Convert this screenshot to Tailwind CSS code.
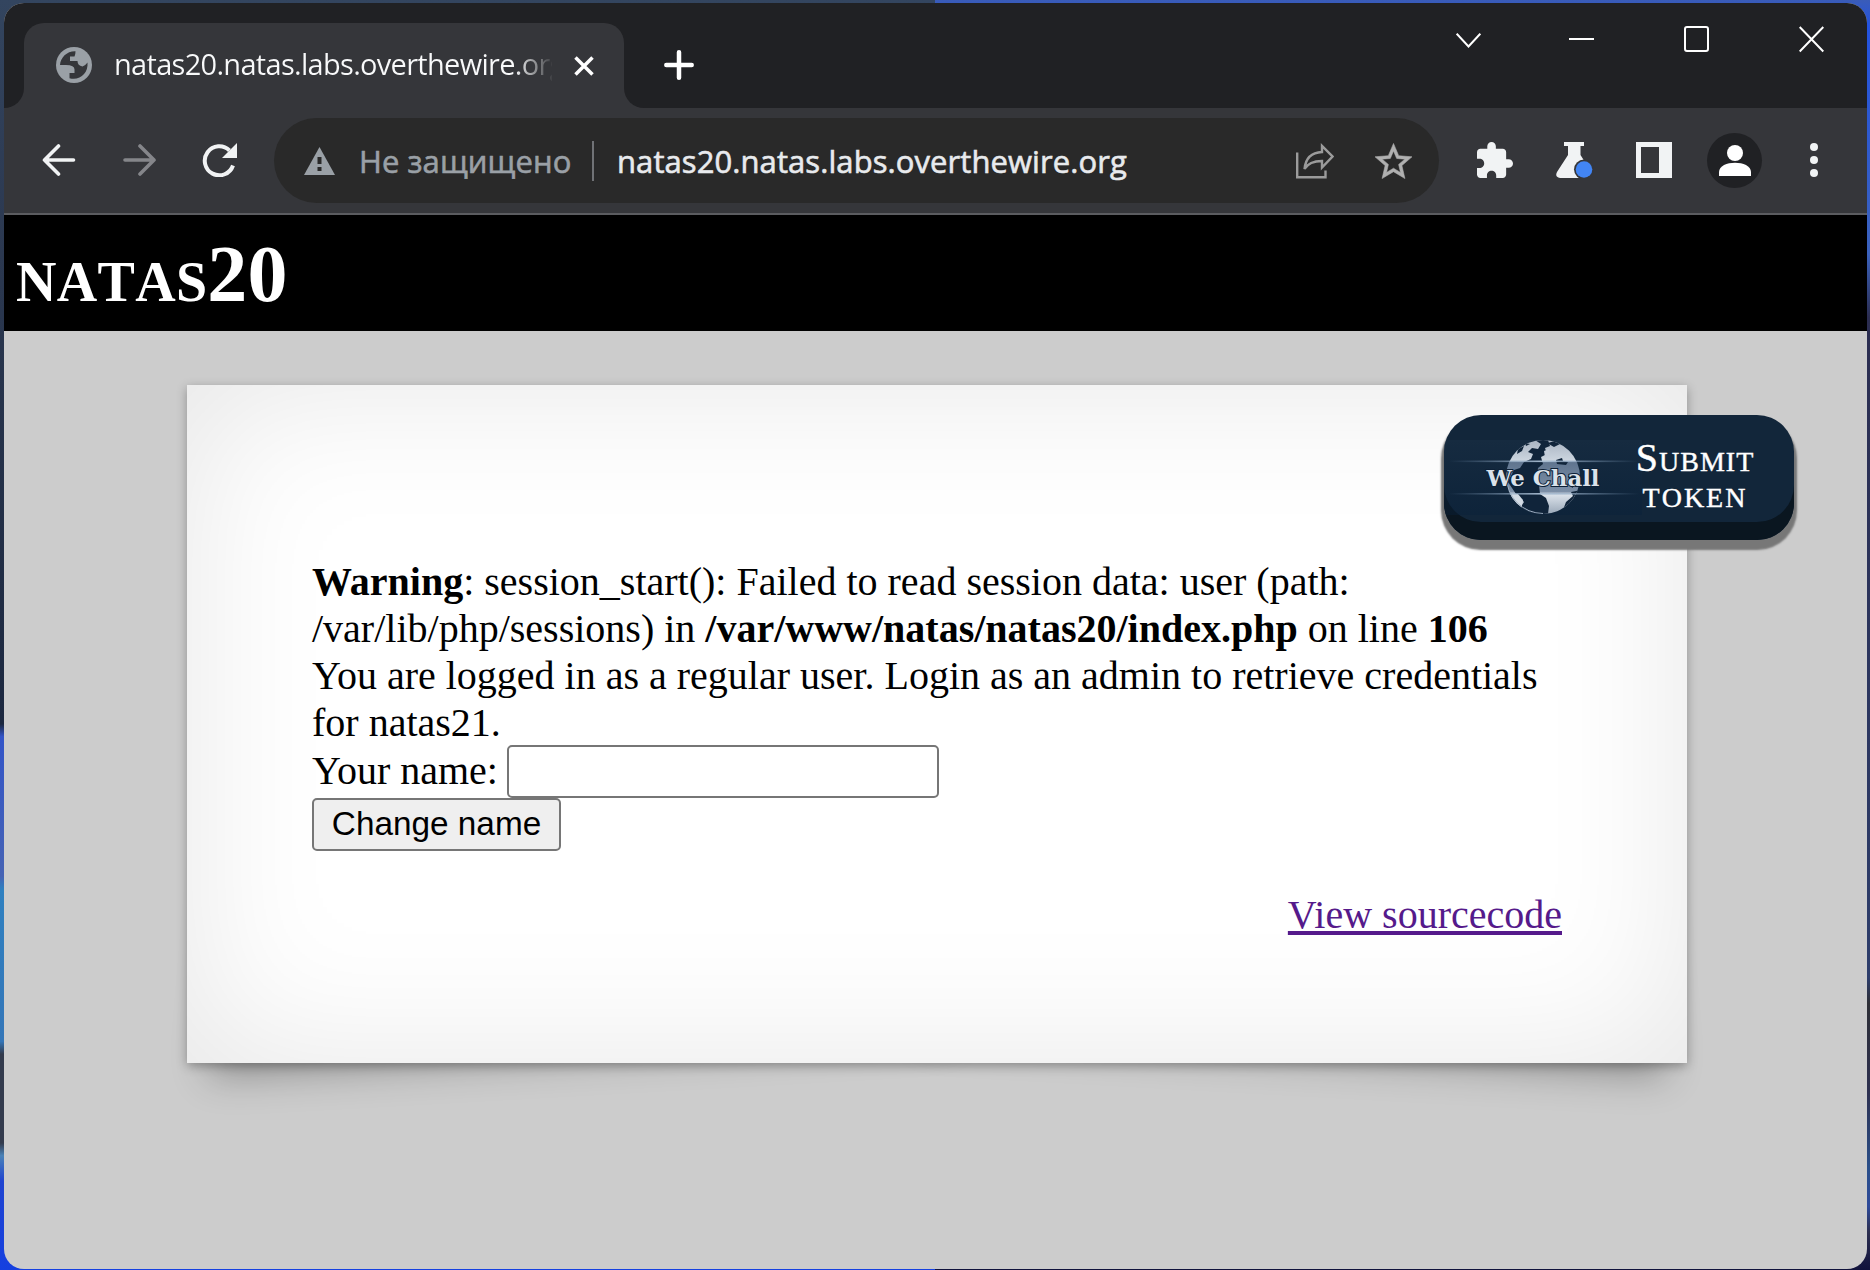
<!DOCTYPE html>
<html lang="ru">
<head>
<meta charset="utf-8">
<title>natas20.natas.labs.overthewire.org</title>
<script src="https://cdn.jsdelivr.net/npm/@tailwindcss/browser@4"></script>
</head>
<body class="relative w-[1870px] h-[1270px] overflow-hidden bg-[#2d3558] pl-[4px] pr-[3px] pt-[3px] pb-px">
<!-- Desktop wallpaper showing round the window -->
<div class="absolute left-0 top-0 -z-10 w-[935px] h-full bg-[linear-gradient(to_bottom,#33455f_0%,#2b3850_20%,#1c2840_57%,#3355c8_58%,#4663b4_69%,#2f80c0_70%,#3476b8_82%,#333b4d_83%,#333b4d_90%,#4a82b8_91%,#2044d0_93%,#1540e0_100%)]"></div>
<div class="absolute right-0 top-0 -z-10 w-[935px] h-full bg-[linear-gradient(to_bottom,#3a5cb8_0%,#2353e0_2%,#3b62bd_20%,#2b2d50_25%,#2d3d6b_77%,#2e2f36_79%,#2d3050_86%,#2a4f8a_92%,#2e4a9a_95%,#2d2f50_97%,#10123c_100%)]"></div>
<div class="w-full h-full rounded-[20px] overflow-hidden flex flex-col bg-[#cccccc]">

  <!-- Tab strip -->
  <div class="h-[105px] shrink-0 bg-[#202124] flex justify-between">
    <div class="flex pt-[20px]">
      <div class="w-[20px] bg-[#35363a]"><div class="w-full h-full bg-[#202124] rounded-br-[20px]"></div></div>
      <div class="w-[600px] h-[85px] rounded-t-[20px] bg-[#35363a] flex items-center pl-[32px]">
        <svg class="w-[36px] h-[36px] shrink-0 -mt-[1px]" viewBox="0 0 36 36"><circle cx="18" cy="18" r="18" fill="#9aa0a6"/><path d="M19.500 4.300C11 4 4.500 10.500 4 18H10Q18.500 18 18.500 22.500V26H13.500V31.300C24 34 32.500 26 31.500 15.500Q29 19 26.500 19.500Q21.500 18.500 21.500 14H14V9.500H18.500Q19.500 8 19.500 4.300Z" fill="#35363a"/></svg>
        <div class="ml-[22px] pb-[3px] w-[438px] overflow-hidden whitespace-nowrap font-['Open_Sans',sans-serif] text-[29px] text-transparent bg-clip-text bg-[linear-gradient(to_right,#f8f9fa_0,#f8f9fa_400px,#35363a_440px)] tracking-[-0.7px]">natas20.natas.labs.overthewire.org</div>
        <svg class="ml-[22px] w-[20px] h-[20px] shrink-0" viewBox="0 0 20 20" stroke="#fff" stroke-width="3.500"><path d="M1.500 1.500 18.500 18.500M18.500 1.500 1.500 18.500"/></svg>
      </div>
      <div class="w-[20px] bg-[#35363a]"><div class="w-full h-full bg-[#202124] rounded-bl-[20px]"></div></div>
      <svg class="ml-[20px] mt-[27px] w-[30px] h-[30px]" viewBox="0 0 30 30" stroke="#fff" stroke-width="4.500" stroke-linecap="round"><path d="M15 2.300V27.700M2.300 15H27.700"/></svg>
    </div>
    <div class="flex gap-[90px] pt-[23px] pr-[43px]">
      <svg class="w-[25px] h-[27px] mr-[-2px]" viewBox="0 0 25 27" fill="none" stroke="#fff" stroke-width="2"><path d="M.7 7.700 12.500 20.500 24.300 7.700"/></svg>
      <svg class="w-[25px] h-[27px]" viewBox="0 0 25 27" stroke="#fff" stroke-width="2"><path d="M0 13H25"/></svg>
      <svg class="w-[25px] h-[27px]" viewBox="0 0 25 27" fill="none" stroke="#fff" stroke-width="2"><rect x="1" y="1" width="23" height="24" rx="2"/></svg>
      <svg class="w-[25px] h-[27px]" viewBox="0 0 25 27" stroke="#fff" stroke-width="2"><path d="M.7 1 24.300 25.500M24.300 1 .7 25.500"/></svg>
    </div>
  </div>

  <!-- Toolbar -->
  <div class="h-[107px] shrink-0 bg-[#35363a] border-b-2 border-[#5b5c60] flex items-center">
    <svg class="ml-[38px] -mt-[2px] w-[34px] h-[32px]" viewBox="0 0 34 32" fill="none" stroke="#f1f3f4" stroke-width="3.600" stroke-linecap="round" stroke-linejoin="round"><path d="M31.500 16H2.500M16.500 2 2.500 16 16.500 30"/></svg>
    <svg class="ml-[47px] -mt-[2px] w-[34px] h-[32px]" viewBox="0 0 34 32" fill="none" stroke="#85868a" stroke-width="3.600" stroke-linecap="round" stroke-linejoin="round"><path d="M2 16H31M17 2 31 16 17 30"/></svg>
    <svg class="ml-[45px] -mt-[2px] w-[36px] h-[34px]" viewBox="0 0 36 34"><path d="M31 22.500A14.500 14.500 0 1 1 27.500 7.500" fill="none" stroke="#f1f3f4" stroke-width="4"/><path d="M35 0V15H20Z" fill="#f1f3f4"/></svg>
    <div class="ml-[36px] w-[1165px] shrink-0 h-[85px] rounded-full bg-[#292929] flex items-center font-['Open_Sans',sans-serif] text-[31px] tracking-[0.08px]">
      <svg class="ml-[30px] w-[31px] h-[28px]" viewBox="0 0 31 28"><path d="M15.500 0 31 28H0Z" fill="#9aa0a6"/><path d="M13.500 10h4v7h-4zM13.500 20h4v4h-4z" fill="#292929"/></svg>
      <div class="ml-[24px] w-[233px] pt-[1px] whitespace-nowrap font-medium text-[#9aa0a6] [-webkit-text-stroke:0.6px_#9aa0a6]">Не защищено</div>
      <div class="w-[2px] h-[40px] bg-[#707276]"></div>
      <div class="ml-[23px] w-[679px] pt-[1px] whitespace-nowrap font-medium text-[#e8eaed] [-webkit-text-stroke:0.6px_#e8eaed]">natas20.natas.labs.overthewire.org</div>
      <svg class="w-[38px] h-[36px]" viewBox="0 0 38 36" fill="none" stroke="#9b9b9b" stroke-width="2.400"><path d="M1.200 9.500V34.300H29.500V27.500M8.500 26C9.500 16 15 9.500 26 9V3L36.500 13.500 26 24.500V18C18 18 12 20 8.500 26Z"/></svg>
      <svg class="ml-[41px] w-[37px] h-[36px]" viewBox="2 2 20 19" fill="#b0b0b0" stroke="#b0b0b0" stroke-width=".3"><path d="M22 9.240l-7.190-.62L12 2 9.190 8.630 2 9.240l5.460 4.730L5.820 21 12 17.270 18.180 21l-1.630-7.030L22 9.240zM12 15.400l-3.760 2.270 1-4.280-3.320-2.880 4.380-.38L12 6.100l1.710 4.040 4.380.38-3.320 2.880 1 4.280L12 15.400z"/></svg>
    </div>
    <svg class="ml-[38px] -mt-[2px] w-[36px] h-[36px]" viewBox="2 1 21 21" fill="#f1f3f4"><path d="M20.500 11H19V7c0-1.100-.9-2-2-2h-4V3.500a2.500 2.500 0 0 0-5 0V5H4c-1.100 0-1.990.9-1.990 2v3.800H3.500c1.490 0 2.700 1.210 2.700 2.700s-1.210 2.700-2.700 2.700H2V20c0 1.100.9 2 2 2h3.800v-1.500c0-1.490 1.210-2.700 2.700-2.700s2.700 1.210 2.700 2.700V22H17c1.100 0 2-.9 2-2v-4h1.500a2.500 2.500 0 0 0 0-5z"/></svg>
    <svg class="ml-[43px] -mt-[1px] w-[38px] h-[38px]" viewBox="0 0 38 38"><path d="M8 1H28V5H24.500V14L34 29Q37 37 30 37H4Q-1.500 36 1 31L12 14V5H8Z" fill="#f1f3f4"/><circle cx="28" cy="28.500" r="10" fill="#35363a"/><circle cx="28" cy="28.500" r="8.300" fill="#4285f4"/></svg>
    <svg class="ml-[42px] -mt-[2px] w-[36px] h-[36px]" viewBox="0 0 36 36"><path d="M0 0H36V36H0ZM5 5V31H23V5Z" fill="#f1f3f4" fill-rule="evenodd"/></svg>
    <div class="ml-[35px] w-[55px] h-[55px] shrink-0 rounded-full bg-[#202124] flex justify-center items-center">
      <svg class="w-[32px] h-[31px]" viewBox="0 0 32 31" fill="#fff"><circle cx="16" cy="8" r="8"/><path d="M0 31V27C0 14.500 32 14.500 32 27V31Z"/></svg>
    </div>
    <svg class="ml-[48px] -mt-[2px] w-[8px] h-[34px]" viewBox="0 0 8 34" fill="#f1f3f4"><circle cx="4" cy="4" r="4"/><circle cx="4" cy="17" r="4"/><circle cx="4" cy="30" r="4"/></svg>
  </div>

  <!-- Page -->
  <h1 class="h-[116px] shrink-0 bg-black text-white font-bold font-['Liberation_Serif',serif] text-[80px] leading-[92px] [font-variant:small-caps] [font-kerning:none] tracking-[0.3px] pl-[12px] pt-[13px]">natas20</h1>
  <div class="relative z-0 grow pt-[54px] pl-[183px] font-['Liberation_Serif',serif]">
    <div class="relative w-[1500px] h-[678px]">
      <!-- Tilted boxes that give the card its lifted corners -->
      <div class="absolute -z-10 left-[36px] bottom-[27px] w-[739px] h-[250px] [transform:skew(-8deg)_rotate(-3.200deg)] shadow-[0_20px_38px_rgba(0,0,0,0.3)]"></div>
      <div class="absolute -z-10 right-[36px] bottom-[27px] w-[739px] h-[250px] [transform:skew(8deg)_rotate(3.200deg)] shadow-[0_20px_38px_rgba(0,0,0,0.3)]"></div>
      <div class="w-full h-full bg-white shadow-[0_2.5px_10px_rgba(0,0,0,0.3),inset_0_0_150px_rgba(0,0,0,0.1)] pl-[125px] pr-[125px] pt-[173px] text-[40px] leading-[47px] text-black">
        <p><b>Warning</b>: session_start(): Failed to read session data: user (path: /var/lib/php/sessions) in <b>/var/www/natas/natas20/index.php</b> on line <b>106</b></p>
        <p>You are logged in as a regular user. Login as an admin to retrieve credentials for natas21.</p>
        <div class="flex mt-[-1px] h-[53px]"><span class="w-[195px] pt-[2px] shrink-0">Your name:</span><input class="w-[432px] h-[53px] border-2 border-[#767676] rounded-[5px] bg-white"></div>
        <button class="block w-[249px] h-[53px] border-2 border-[#767676] rounded-[5px] bg-[#efefef] font-['Liberation_Sans',sans-serif] text-[33.33px] leading-[47px] pb-[2px] whitespace-nowrap">Change name</button>
        <div class="mt-[40px] text-right"><a class="text-[#551a8b] underline decoration-[4px] underline-offset-[3px]">View sourcecode</a></div>
      </div>
      <!-- WeChall button over the card's corner -->
      <div class="absolute left-[1257px] top-[30px] w-[350px] h-[125px] rounded-[37px] overflow-hidden bg-[#12263a] shadow-[inset_0_-18px_0_#0a1620,0_7px_2px_2.500px_#777777] flex items-center text-white">
        <svg class="w-[198px] h-[75px] shrink-0" viewBox="0 0 198 75">
          <defs>
            <linearGradient id="gl" x1="0" y1="0" x2="0" y2="1"><stop offset="0" stop-color="#a9b4c2"/><stop offset=".28" stop-color="#ccd5df"/><stop offset=".3" stop-color="#60758f"/><stop offset=".7" stop-color="#7d90a8"/><stop offset=".73" stop-color="#dde4ec"/><stop offset="1" stop-color="#9aa8b8"/></linearGradient>
            <linearGradient id="ln"><stop offset="0" stop-color="#6f8dac" stop-opacity="0"/><stop offset=".5" stop-color="#a9bdd2"/><stop offset="1" stop-color="#6f8dac" stop-opacity="0"/></linearGradient>
            <linearGradient id="bd" x1="0" y1="0" x2="0" y2="1"><stop offset="0" stop-color="#1a3046" stop-opacity=".5"/><stop offset="1" stop-color="#08203a" stop-opacity=".4"/></linearGradient>
            <clipPath id="cp"><circle cx="99" cy="37" r="37"/></clipPath>
          </defs>
          <rect width="198" height="75" fill="url(#bd)"/>
          <circle cx="99" cy="37" r="37" fill="url(#gl)"/>
          <g clip-path="url(#cp)" fill="#10243a">
            <path d="M91 0 97 4 94 9 88 8 84 12 89 14 87 19 80 22 76 28 70 30 64 42 72 54 80 62 76 68 84 74H104L105 66 102 58 96 54 95 45 93 38 94 28 99 24 97 17 103 14 101 8 106 6 104 0Z"/>
            <path d="M103 3 112 1 116 4 110 7ZM112 20 118 18 119 21 124 22 122 25 113 24ZM124 36 130 34 133 44 128 48ZM119 70 122 62 129 56 127 52 138 50V74H110Z"/>
            <path d="M74 9 80 6 78 11 73 14ZM81 3 86 4 82 6Z"/>
          </g>
          <g clip-path="url(#cp)">
            <path d="M100 11 105 9 106 14 101 17Z" fill="#c3ccd8"/>
            <path d="M65 53 74 54 79 60 77 70 66 58Z" fill="#d3dbe4"/>
            <path d="M62.500 37A36.500 36.500 0 0 0 99 73.500" fill="none" stroke="#9fb0c3" stroke-width="1"/>
          </g>
          <rect x="5" y="20.500" width="190" height="1.600" fill="url(#ln)"/><rect x="5" y="53" width="190" height="1.600" fill="url(#ln)"/>
          <text x="42.500" y="45.500" textLength="113" lengthAdjust="spacingAndGlyphs" font-family="DejaVu Serif, serif" font-weight="bold" font-size="23" fill="#dbe2ea" stroke="#0d2036" stroke-width="2" paint-order="stroke">We Chall</text>
        </svg>
        <div class="w-[126px] -ml-[10px] -mt-[3px] flex flex-col items-center text-[40px] leading-[36px] [font-variant:small-caps] [font-kerning:none]"><span class="tracking-[1px] [-webkit-text-stroke:0.4px_white]">Submit</span><span class="tracking-[2px] [-webkit-text-stroke:0.4px_white]">token</span></div>
      </div>
    </div>
  </div>
</div>
</body>
</html>
